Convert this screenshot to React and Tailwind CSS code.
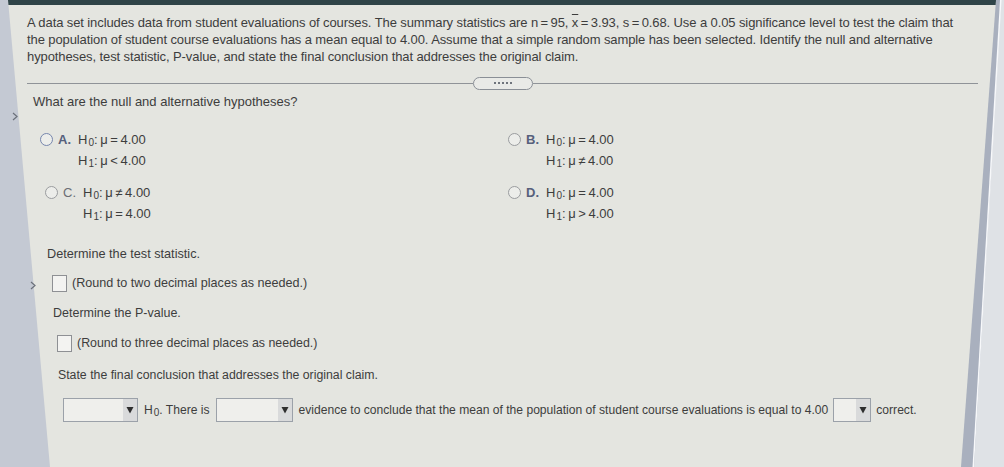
import React from 'react'

const T = '\u2009'

const Sub = ({ children }) => (
  <sub className="text-[10px] relative top-[2px] ml-[1px]">{children}</sub>
)

const Radio = ({ focus }) => (
  <span
    className={
      'inline-block w-[13px] h-[13px] rounded-full border-[1.5px] bg-[#ecedea] ' +
      (focus ? 'border-[#7686ad]' : 'border-[#9a9c9f]')
    }
  />
)

const Option = ({ letter, h0, h1, focus, dim, className }) => (
  <div className={'flex items-start ' + className}>
    <div className="h-[21px] flex items-center">
      <Radio focus={focus} />
    </div>
    <span
      className={
        'w-[25px] pl-[5px] leading-[21px] font-bold ' +
        (dim ? 'text-[#6b6e74] font-normal' : 'text-[#56607c]')
      }
    >
      {letter}.
    </span>
    <div className="leading-[21px]">
      <div>
        H<Sub>0</Sub>:{T}μ{T}{h0}{T}4.00
      </div>
      <div>
        H<Sub>1</Sub>:{T}μ{T}{h1}{T}4.00
      </div>
    </div>
  </div>
)

const Check = () => (
  <span className="inline-block w-[15px] h-[17px] border border-[#8e9094] bg-[#f3f3f1]" />
)

const Drop = ({ w }) => (
  <span
    className="inline-flex h-[24px] border border-[#9ba1a9] bg-[#efefec] justify-end"
    style={{ width: w }}
  >
    <span className="w-[14px] h-full bg-[#d9dadb] flex items-center justify-center">
      <svg width="8" height="8" viewBox="0 0 8 8">
        <path d="M0.5 1 L7.5 1 L4 7.5 Z" fill="#2e2e2e" />
      </svg>
    </span>
  </span>
)

const Chevron = ({ className }) => (
  <svg className={'absolute ' + className} width="6" height="9" viewBox="0 0 6 9">
    <path d="M1 1 L5 4.5 L1 8" fill="none" stroke="#6b707a" strokeWidth="1.2" />
  </svg>
)

export default function App() {
  return (
    <div className="relative w-[1004px] h-[467px] overflow-hidden bg-[#c4c9d3] font-['Liberation_Sans',Arial,sans-serif] text-[13px] text-[#3d3d3d]">
      {/* monitor frame bits on the right */}
      <div className="absolute inset-0 bg-[#a9b0be] [clip-path:polygon(990px_0,1004px_0,1004px_100%,955px_100%)]" />
      <div className="absolute inset-0 bg-[#dfe2e6] [clip-path:polygon(1001px_0,1004px_0,1004px_100%,974px_100%)]" />
      <div className="absolute inset-0 bg-[#f7f8fa] [clip-path:polygon(1000px_0,1001.5px_0,974px_100%,972.5px_100%)]" />

      {/* panel */}
      <div className="absolute inset-0 bg-[#e4e5e0] [clip-path:polygon(8px_0,996px_0,961px_100%,50px_100%)]">
        <div className="h-[5px] bg-[#2f4448]" />
      </div>

      <Chevron className="left-[12px] top-[112px]" />
      <Chevron className="left-[30px] top-[281px]" />

      <div className="relative pt-[14px]">
        <div className="ml-[27px] leading-[17px] whitespace-nowrap tracking-[-0.1px]">
          <div>
            A data set includes data from student evaluations of courses. The summary statistics are n{T}={T}95,{' '}
            <span className="overline">x</span>
            {T}={T}3.93, s{T}={T}0.68. Use a 0.05 significance level to test the claim that
          </div>
          <div>
            the population of student course evaluations has a mean equal to 4.00. Assume that a simple random sample has
            been selected. Identify the null and alternative
          </div>
          <div>hypotheses, test statistic, P-value, and state the final conclusion that addresses the original claim.</div>
        </div>

        <div className="ml-[27px] mt-[11px] w-[951px] h-[14px] flex items-center">
          <div className="flex-1 h-px bg-[#8f9398]" />
          <div className="w-[60px] h-[13px] rounded-full border-[1.5px] border-[#8a8f96] bg-[#e9eae7] flex items-center justify-center gap-[2px]">
            {[0, 1, 2, 3, 4].map(i => (
              <span key={i} className="w-[2px] h-[2px] bg-[#6f747c]" />
            ))}
          </div>
          <div className="flex-1 h-px bg-[#8f9398]" />
        </div>

        <div className="ml-[33px] mt-[3px] leading-[17px]">What are the null and alternative hypotheses?</div>

        <div className="mt-[19px] flex flex-col gap-[11px]">
          <div className="flex">
            <Option letter="A" h0="=" h1="<" focus className="ml-[40px] w-[468px]" />
            <Option letter="B" h0="=" h1="≠" />
          </div>
          <div className="flex">
            <Option letter="C" h0="≠" h1="=" dim className="ml-[45px] w-[463px]" />
            <Option letter="D" h0="=" h1=">" />
          </div>
        </div>

        <div className="ml-[47px] mt-[22px] leading-[17px] text-[12.7px]">Determine the test statistic.</div>
        <div className="ml-[52px] mt-[12px] flex items-center gap-[5px] h-[17px] text-[12.6px]">
          <Check />
          <span>(Round to two decimal places as needed.)</span>
        </div>

        <div className="ml-[53px] mt-[13px] leading-[17px] text-[12.5px]">Determine the P-value.</div>
        <div className="ml-[57px] mt-[13px] flex items-center gap-[5px] h-[17px] text-[12.4px]">
          <Check />
          <span>(Round to three decimal places as needed.)</span>
        </div>

        <div className="ml-[58px] mt-[15px] leading-[17px] text-[12.3px]">
          State the final conclusion that addresses the original claim.
        </div>
        <div className="ml-[63px] mt-[14px] flex items-center h-[24px] whitespace-nowrap text-[12.1px]">
          <Drop w={75} />
          <span className="ml-[6px] mr-[6px]">
            H<Sub>0</Sub>. There is
          </span>
          <Drop w={77} />
          <span className="ml-[6px] mr-[5px]">
            evidence to conclude that the mean of the population of student course evaluations is equal to 4.00
          </span>
          <Drop w={38} />
          <span className="ml-[5px]">correct.</span>
        </div>
      </div>
    </div>
  )
}
